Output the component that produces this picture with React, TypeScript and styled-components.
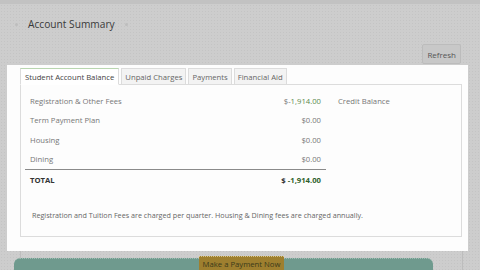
import React from 'react';
import styled, { createGlobalStyle } from 'styled-components';

const GlobalStyle = createGlobalStyle`
  html, body {
    margin: 0;
    padding: 0;
    width: 480px;
    height: 270px;
    overflow: hidden;
    font-family: 'Open Sans', 'Liberation Sans', sans-serif;
  }
`;

const rows = [
  { label: 'Registration & Other Fees', amount: '1,914.00', negative: true, note: 'Credit Balance' },
  { label: 'Term Payment Plan', amount: '$0.00' },
  { label: 'Housing', amount: '$0.00' },
  { label: 'Dining', amount: '$0.00' }
];

const tabs = ['Student Account Balance', 'Unpaid Charges', 'Payments', 'Financial Aid'];

const App = () => {
  return (
    <Page>
      <GlobalStyle />
      <Header>
        <Dot />
        <Title>Account Summary</Title>
        <Dot />
      </Header>
      <Toolbar>
        <RefreshButton>Refresh</RefreshButton>
      </Toolbar>
      <Highlight>
        <TabList>
          {tabs.map((t, i) => (
            <Tab key={t} active={i === 0}>
              {t}
            </Tab>
          ))}
        </TabList>
        <TabPanel>
          <Table>
            {rows.map((r) => (
              <Row key={r.label}>
                <Label>{r.label}</Label>
                <Amount>
                  {r.negative ? (
                    <>
                      $-<Green>{r.amount}</Green>
                    </>
                  ) : (
                    r.amount
                  )}
                </Amount>
                <Note>{r.note}</Note>
              </Row>
            ))}
            <TotalRow>
              <Label>TOTAL</Label>
              <Amount>
                $ <Green dark>-1,914.00</Green>
              </Amount>
              <Note />
            </TotalRow>
          </Table>
          <Footnote>
            Registration and Tuition Fees are charged per quarter. Housing &amp; Dining fees are charged
            annually.
          </Footnote>
        </TabPanel>
      </Highlight>
      <Lower>
        <LowerCard />
        <PayBar>
          <PayButton>Make a Payment Now</PayButton>
        </PayBar>
      </Lower>
    </Page>
  );
};

export default App;

interface TabProps {
  active?: boolean;
}

interface GreenProps {
  dark?: boolean;
}

const Page = styled.div`
  width: 480px;
  height: 270px;
  background-color: #cdcdcd;
  background-image: radial-gradient(#c4c4c4 0.6px, transparent 0.7px);
  background-size: 3px 3px;
  border-top: 4px solid #c2c2c2;
  box-sizing: border-box;
  position: relative;
  overflow: hidden;
`;

const Header = styled.div`
  display: flex;
  align-items: center;
  gap: 10px;
  height: 40px;
  padding-left: 15px;
`;

const Dot = styled.span`
  width: 3px;
  height: 3px;
  border-radius: 50%;
  background: #bdbdbd;
`;

const Title = styled.h1`
  margin: 0;
  font-size: 10.2px;
  font-weight: 400;
  color: #3a3a3a;
`;

const Toolbar = styled.div`
  display: flex;
  justify-content: flex-end;
  padding: 0 19px 0 0;
  height: 21px;
`;

const RefreshButton = styled.button`
  height: 20px;
  padding: 0 4px;
  font-family: inherit;
  font-size: 8px;
  color: #555;
  background: #c8c8c8;
  border: 1px solid #bcbcbc;
  border-radius: 2px;
`;

const Highlight = styled.div`
  margin: 0 0 0 7px;
  width: 461px;
  height: 186px;
  box-sizing: border-box;
  background: #fdfdfd;
  padding: 3px 6px 0 13px;
  position: relative;
  z-index: 2;
`;

const TabList = styled.div`
  display: flex;
  gap: 2px;
  height: 17px;
`;

const Tab = styled.div<TabProps>`
  display: flex;
  align-items: center;
  padding: ${(p) => (p.active ? '0 4px' : '0 3px')};
  font-size: 7.7px;
  color: ${(p) => (p.active ? '#444' : '#666')};
  background: ${(p) => (p.active ? '#fff' : '#f3f3f3')};
  border: 1px solid #dcdcdc;
  border-top: 1px solid ${(p) => (p.active ? '#b9d6b0' : '#dcdcdc')};
  border-bottom: ${(p) => (p.active ? '1px solid #fff' : '1px solid #dcdcdc')};
  position: relative;
  z-index: 1;
`;

const TabPanel = styled.div`
  margin-top: -1px;
  height: 153px;
  box-sizing: border-box;
  border: 1px solid #dcdcdc;
  padding: 6px 0 0 4px;
`;

const Table = styled.div`
  width: 301px;
  display: flex;
  flex-direction: column;
`;

const Row = styled.div`
  display: grid;
  grid-template-columns: 1fr 120px 0px;
  align-items: center;
  height: 19.5px;
  font-size: 7.7px;
  color: #777;
`;

const TotalRow = styled(Row)`
  border-top: 1.5px solid #8a8a8a;
  font-weight: 700;
  color: #333;
`;

const Label = styled.span`
  padding-left: 5px;
`;

const Amount = styled.span`
  text-align: right;
  padding-right: 5px;
`;

const Note = styled.span`
  white-space: nowrap;
  padding-left: 12px;
`;

const Green = styled.span<GreenProps>`
  color: ${(p) => (p.dark ? '#2f5f2a' : '#5a8a4e')};
`;

const Footnote = styled.p`
  margin: 20px 0 0 7px;
  font-size: 7.2px;
  color: #666;
`;

const Lower = styled.div`
  position: relative;
  margin-top: -3px;
  height: 40px;
`;

const LowerCard = styled.div`
  margin-left: 20px;
  width: 441px;
  height: 30px;
  border: 1px solid #bdbdbd;
  border-bottom: none;
`;

const PayBar = styled.div`
  position: absolute;
  left: 14px;
  top: 10px;
  width: 419px;
  height: 24px;
  background: #6f9a8e;
  border-radius: 6px;
  border-top: 1px dotted #9fbdb3;
  display: flex;
  justify-content: center;
  padding-left: 36px;
  box-sizing: border-box;
`;

const PayButton = styled.div`
  margin-top: -3px;
  height: 20px;
  padding: 0 4px;
  background: #9e7f2f;
  border-top: 1px dotted #d8c48a;
  font-size: 7.7px;
  color: #3a3a1a;
  line-height: 14px;
`;
